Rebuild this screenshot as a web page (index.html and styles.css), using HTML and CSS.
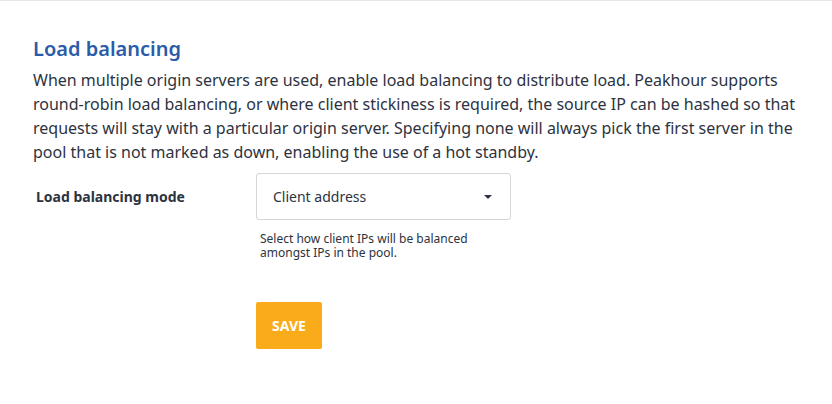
FILE: index.html
```html
<!DOCTYPE html>
<html lang="en">
<head>
    <meta charset="UTF-8">
    <meta name="viewport" content="width=device-width, initial-scale=1.0">
    <title>Load balancing</title>
    <link rel="stylesheet" href="styles.css">
</head>
<body>

<div class="panel">
    <h2 class="panel-title">Load balancing</h2>
    <p class="panel-text">
        When multiple origin servers are used, enable load balancing to distribute load. Peakhour supports
        round-robin load balancing, or where client stickiness is required, the source IP can be hashed so that
        requests will stay with a particular origin server. Specifying none will always pick the first server in the
        pool that is not marked as down, enabling the use of a hot standby.
    </p>

    <form class="settings-form" action="#" method="post">
        <!-- Mode -->
        <div class="form-row">
            <label class="form-label" for="lb-mode">Load balancing mode</label>
            <div class="form-field">
                <div class="select-box">
                    <span class="select-value">Client address</span>
                    <span class="select-caret"></span>
                </div>
                <div class="help-text">Select how client IPs will be balanced amongst IPs in the pool.</div>
            </div>
        </div>

        <!-- Save -->
        <div class="form-actions">
            <button class="save-btn" type="submit">SAVE</button>
        </div>
    </form>
</div>

</body>
</html>
```

FILE: styles.css
```css
body {
    font-family: 'Noto Sans', sans-serif;
    background: #ffffff;
    color: #2d3340;
    margin: 0;
    padding: 0;
}
.panel {
    border-top: 1px solid #e6e7eb;
    padding: 34px 33px 0 33px;
    height: 369px;
}
.panel-title {
    margin: 0 0 5px 0;
    font-size: 20px;
    font-weight: 600;
    line-height: 28px;
    color: #2b5ca9;
}
.panel-text {
    margin: 0;
    font-size: 16px;
    line-height: 24px;
    color: #2d3340;
}
.settings-form {
    margin-top: 9px;
}
.form-row {
    display: flex;
    align-items: flex-start;
}
.form-label {
    width: 220px;
    padding-left: 3px;
    padding-top: 14px;
    font-size: 14px;
    font-weight: 700;
    line-height: 20px;
    color: #2d3340;
}
.form-field {
    width: 255px;
}
.select-box {
    display: flex;
    align-items: center;
    justify-content: space-between;
    height: 45px;
    padding: 0 18px 0 16px;
    border: 1px solid #d4d6da;
    border-radius: 3px;
}
.select-value {
    font-size: 14px;
    color: #2d3340;
}
.select-caret {
    width: 0;
    height: 0;
    border-left: 4px solid transparent;
    border-right: 4px solid transparent;
    border-top: 4px solid #2d3340;
}
.help-text {
    margin-top: 12px;
    padding: 0 4px;
    font-size: 12px;
    line-height: 14px;
    color: #2d3340;
}
.form-actions {
    margin-left: 223px;
    margin-top: 42px;
}
.save-btn {
    width: 66px;
    height: 47px;
    border: none;
    border-radius: 2px;
    background-color: #f9ab19;
    color: white;
    font-family: 'Noto Sans', sans-serif;
    font-size: 14px;
    font-weight: 700;
    cursor: pointer;
}
```
